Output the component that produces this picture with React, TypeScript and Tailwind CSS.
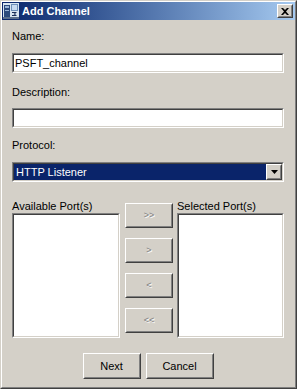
import React from 'react'

const font = { fontFamily: '"Liberation Sans", Arial, sans-serif' }

// sunken 3D border used by text fields and list boxes
function Sunken({ className = '', children }: { className?: string; children?: React.ReactNode }) {
  return (
    <div className={`border border-t-[#808080] border-l-[#808080] border-b-white border-r-white ${className}`}>
      <div className="w-full h-full border border-t-[#404040] border-l-[#404040] border-b-[#d4d0c8] border-r-[#d4d0c8] bg-white">
        {children}
      </div>
    </div>
  )
}

function RaisedButton({ className = '', disabled, children }: { className?: string; disabled?: boolean; children: React.ReactNode }) {
  return (
    <div className={`border border-t-white border-l-white border-b-[#404040] border-r-[#404040] bg-[#d4d0c8] ${className}`}>
      <div
        className={`w-full h-full border border-t-[#d4d0c8] border-l-[#d4d0c8] border-b-[#808080] border-r-[#808080] flex items-center justify-center ${
          disabled ? 'text-[9px] text-[#808080] [text-shadow:1px_1px_0_#fff]' : 'text-[11px] text-black'
        }`}
      >
        {children}
      </div>
    </div>
  )
}

function AppIcon() {
  return (
    <svg width="16" height="16" viewBox="0 0 16 16">
      <rect x="0" y="0" width="16" height="16" fill="#d8e4f0" />
      <rect x="1" y="2" width="6" height="12" fill="#2c4a7c" />
      <rect x="2" y="3" width="4" height="2" fill="#9ab4d8" />
      <rect x="2" y="7" width="4" height="1" fill="#9ab4d8" />
      <rect x="8" y="1" width="7" height="7" fill="#6e8fb8" />
      <rect x="9" y="2" width="5" height="5" fill="#c8daf0" />
      <path d="M9 9 h5 l-2 2 l2 2 h-5 v-1 h3 l-1.5 -1 l1.5 -1 h-3 z" fill="#1a2e5a" />
      <rect x="0" y="14" width="16" height="2" fill="#5a6e8c" />
    </svg>
  )
}

export default function App() {
  return (
    <div style={font} className="w-[297px] h-[389px] bg-[#d4d0c8] border border-t-[#d4d0c8] border-l-[#d4d0c8] border-b-[#404040] border-r-[#404040]">
      <div className="w-full h-full border border-t-white border-l-white border-b-[#808080] border-r-[#808080] flex flex-col">
        {/* Title bar */}
        <div className="h-[18px] flex items-center bg-gradient-to-r from-[#0a246a] to-[#a6caf0] pl-[1px] pr-[2px]">
          <AppIcon />
          <span className="ml-[3px] text-white font-bold text-[11px] leading-none">Add Channel</span>
          <div className="ml-auto">
            <RaisedButton className="w-[16px] h-[14px]">
              <svg width="8" height="7" viewBox="0 0 8 7">
                <path d="M0 0 L2 0 L4 2 L6 0 L8 0 L5 3.5 L8 7 L6 7 L4 5 L2 7 L0 7 L3 3.5 Z" fill="#000" />
              </svg>
            </RaisedButton>
          </div>
        </div>

        {/* Form */}
        <div className="pl-[10px] flex flex-col text-[11px] leading-[13px] text-black">
          <div className="mt-[10px] h-[13px]">Name:</div>
          <Sunken className="mt-[10px] w-[272px] h-[20px]">
            <div className="px-[1px] pt-[2px]">PSFT_channel</div>
          </Sunken>

          <div className="mt-[13px] h-[13px]">Description:</div>
          <Sunken className="mt-[9px] w-[272px] h-[20px]" />

          <div className="mt-[11px] h-[13px]">Protocol:</div>
          <Sunken className="mt-[10px] w-[272px] h-[20px]">
            <div className="flex h-full bg-[#0a246a]">
              <div className="flex-1 text-white px-[2px] flex items-center">HTTP Listener</div>
              <div className="bg-[#d4d0c8] h-full">
                <RaisedButton className="w-[16px] h-full">
                  <svg width="7" height="4" viewBox="0 0 7 4">
                    <path d="M0 0 H7 L3.5 4 Z" fill="#000" />
                  </svg>
                </RaisedButton>
              </div>
            </div>
          </Sunken>

          {/* Port pickers */}
          <div className="mt-[18px] flex w-[272px]">
            <div className="flex flex-col w-[108px]">
              <div className="h-[13px]">Available Port(s)</div>
              <Sunken className="w-full h-[125px]" />
            </div>
            <div className="ml-[5px] w-[48px] pt-[3px] flex flex-col gap-[10px]">
              <RaisedButton disabled className="h-[25px]">&gt;&gt;</RaisedButton>
              <RaisedButton disabled className="h-[25px]">&gt;</RaisedButton>
              <RaisedButton disabled className="h-[25px]">&lt;</RaisedButton>
              <RaisedButton disabled className="h-[25px]">&lt;&lt;</RaisedButton>
            </div>
            <div className="ml-[4px] flex flex-col w-[107px]">
              <div className="h-[13px]">Selected Port(s)</div>
              <Sunken className="w-full h-[125px]" />
            </div>
          </div>

          {/* Actions */}
          <div className="mt-[15px] flex justify-center gap-[5px] w-[272px]">
            <RaisedButton className="w-[58px] h-[26px]">Next</RaisedButton>
            <RaisedButton className="w-[68px] h-[26px]">Cancel</RaisedButton>
          </div>
        </div>
      </div>
    </div>
  )
}
